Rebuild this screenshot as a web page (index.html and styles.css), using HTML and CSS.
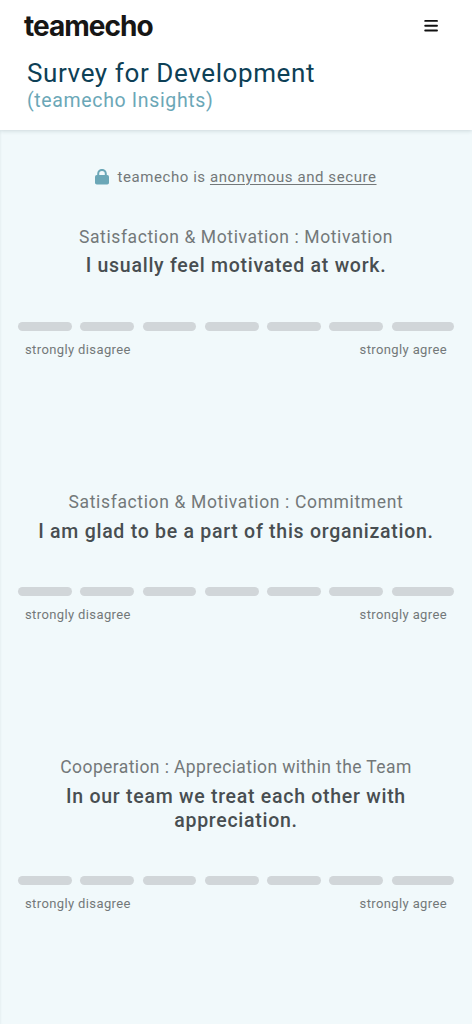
FILE: index.html
```html
<!DOCTYPE html>
<html lang="en">
<head>
<meta charset="utf-8">
<meta name="viewport" content="width=device-width, initial-scale=1">
<title>teamecho</title>
<link rel="stylesheet" href="styles.css">
</head>
<body>
<header class="header">
  <div class="topbar">
    <div class="logo">teamecho</div>
    <svg class="menu" width="14" height="14" viewBox="0 0 14 14" aria-label="Menu"><path d="M1.2 1.9h11.8M1.2 6.7h11.8M1.2 11.5h11.8" stroke="#111" stroke-width="1.9" stroke-linecap="round"/></svg>
  </div>
  <h1 class="title">Survey for Development</h1>
  <div class="subtitle">(teamecho Insights)</div>
</header>
<main class="survey">
  <div class="notice">
    <svg class="lock" width="14" height="16" viewBox="0 0 14 16"><path d="M3.2 7V4.7a3.8 3.8 0 0 1 7.6 0V7" fill="none" stroke="#6ba7b7" stroke-width="2"/><rect y="6" width="14" height="9.6" rx="1.8" fill="#6ba7b7"/></svg>
    <span class="notice-text">teamecho is <a class="link">anonymous and secure</a></span>
  </div>
  <section class="question">
    <div class="category cat-motivation">Satisfaction &amp; Motivation : Motivation</div>
    <h2 class="statement">I usually feel motivated at work.</h2>
    <div class="scale"><i class="step"></i><i class="step"></i><i class="step"></i><i class="step"></i><i class="step"></i><i class="step"></i><i class="step"></i></div>
    <div class="labels"><span>strongly disagree</span><span>strongly agree</span></div>
  </section>
  <section class="question">
    <div class="category cat-commitment">Satisfaction &amp; Motivation : Commitment</div>
    <h2 class="statement">I am glad to be a part of this organization.</h2>
    <div class="scale"><i class="step"></i><i class="step"></i><i class="step"></i><i class="step"></i><i class="step"></i><i class="step"></i><i class="step"></i></div>
    <div class="labels"><span>strongly disagree</span><span>strongly agree</span></div>
  </section>
  <section class="question">
    <div class="category cat-team">Cooperation : Appreciation within the Team</div>
    <h2 class="statement">In our team we treat each other with<br>appreciation.</h2>
    <div class="scale"><i class="step"></i><i class="step"></i><i class="step"></i><i class="step"></i><i class="step"></i><i class="step"></i><i class="step"></i></div>
    <div class="labels"><span>strongly disagree</span><span>strongly agree</span></div>
  </section>
</main>
</body>
</html>
```
FILE: styles.css
```css
* { box-sizing: border-box; }
body {
  margin: 0;
  height: 1024px;
  overflow: hidden;
  background: #f1f9fb;
  font-family: Roboto, "Liberation Sans", sans-serif;
  color: #737879;
  white-space: nowrap;
}
.header {
  height: 130px;
  padding: 8px 34px 0 24px;
  background: #fff;
  box-shadow: 0 1px 4px rgba(40, 70, 80, .18);
}
.topbar {
  display: flex;
  justify-content: space-between;
  align-items: center;
  height: 35px;
}
.logo {
  padding-top: 1px;
  font: 700 28px/35px Inter, sans-serif;
  letter-spacing: -.98px;
  color: #171615;
}
.title {
  margin: 13px 0 0 3px;
  font-size: 26px;
  font-weight: 400;
  line-height: 34px;
  letter-spacing: .6px;
  color: #0d4056;
}
.subtitle {
  margin-left: 3px;
  font-size: 19.5px;
  line-height: 22px;
  letter-spacing: .65px;
  color: #6ba7b7;
}
.survey {
  min-height: 894px;
  padding: 37px 18px 0;
  box-shadow: inset 2px 0 2px -1px rgba(40, 70, 80, .05);
}
.notice {
  display: flex;
  justify-content: center;
  align-items: center;
  gap: 8px;
  height: 20px;
  font-size: 15px;
  letter-spacing: .57px;
}
.link { text-decoration: underline; text-underline-offset: 2px; }
.question { height: 265px; padding-top: 38px; }
.category {
  font-size: 17.5px;
  line-height: 24px;
  letter-spacing: .6px;
  text-align: center;
}
.cat-commitment { letter-spacing: .64px; }
.cat-team { letter-spacing: .4px; }
.statement {
  margin: 5px 0 0;
  font-size: 19.5px;
  font-weight: 500;
  line-height: 24px;
  letter-spacing: .73px;
  text-align: center;
  color: #484e51;
}
.scale {
  display: grid;
  grid-template-columns: repeat(7, 1fr);
  margin-top: 44px;
}
.question + .question .statement { margin-top: 6px; }
.question + .question .scale { margin-top: 43px; }
.step {
  height: 9px;
  margin-right: 8.6px;
  border-radius: 5px;
  background: #d1d6d9;
}
.step:last-child { margin-right: 0; }
.labels {
  display: flex;
  justify-content: space-between;
  padding: 10px 7px 0;
  font-size: 13px;
  line-height: 18px;
  letter-spacing: .38px;
}
```
